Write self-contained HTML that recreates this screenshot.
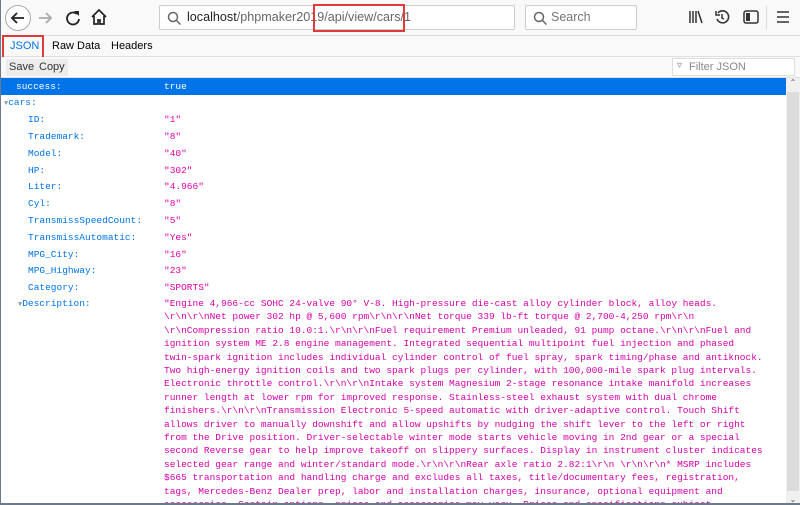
<!DOCTYPE html>
<html><head><style>
*{margin:0;padding:0;box-sizing:border-box}
html,body{width:800px;height:505px;overflow:hidden}
body{background:#fff;font-family:"Liberation Sans",sans-serif;position:relative}
.nav{position:absolute;left:0;top:0;width:800px;height:36px;background:#f9f9fa;border-bottom:1px solid #ddd}
.url{position:absolute;left:159px;top:5px;width:356px;height:25px;border:1px solid #ccc;background:#fff;border-radius:2px;font-size:12.6px;line-height:23px;padding-left:27px;color:#222}
.url span{color:#666}
.srch{position:absolute;left:525px;top:5px;width:112px;height:25px;border:1px solid #ccc;background:#fff;border-radius:2px;font-size:12.5px;line-height:23px;padding-left:25px;color:#777}
.red{position:absolute;border:2px solid #e03a3a}
.tabs{position:absolute;left:0;top:36px;width:800px;height:21px;background:#f9f9fa;border-bottom:1px solid #e0e0e0;font-size:11px}
.tabs div{position:absolute;top:4px}
.bar{position:absolute;left:0;top:57px;width:800px;height:21px;background:#f9f9fa;border-bottom:1px solid #e0e0e0;font-size:11px;color:#333}
.btn{position:absolute;top:2px;height:17px;background:#ececec;padding:2px 3px}
.filter{position:absolute;left:672px;top:1px;width:123px;height:18px;border:1px solid #ddd;background:#fff;color:#888;font-size:11px;padding:2px 0 0 16px}
.row{position:absolute;left:0;height:17px;width:786px;font-family:"Liberation Mono",monospace;font-size:9.5px;line-height:17px;white-space:pre}
.k{position:absolute;left:28px;color:#0074e8}
.v{position:absolute;left:164px;color:#dd00a9}
.sb{position:absolute;left:786px;top:78px;width:14px;height:427px;background:#f0f0f0}
.desc{position:absolute;left:164px;top:297px;width:620px;height:208px;overflow:hidden;font-family:"Liberation Mono",monospace;font-size:9.5px;line-height:13.4px;color:#d400a8;white-space:pre}
.tri{font-size:7px;color:#999}
</style></head><body>
<div class="nav">
<svg style="position:absolute;left:4px;top:4px" width="28" height="28"><circle cx="14" cy="14" r="12.5" fill="#fff" stroke="#aaa"/><path d="M20 14H8M13 9l-5 5 5 5" stroke="#222" stroke-width="1.8" fill="none"/></svg>
<svg style="position:absolute;left:36px;top:9px" width="18" height="18"><path d="M15 9H3M10 4l5 5-5 5" stroke="#aaa" stroke-width="1.8" fill="none"/></svg>
<svg style="position:absolute;left:64px;top:9px" width="18" height="18"><path d="M13 5A6 6 0 1 0 15 10" stroke="#222" stroke-width="1.8" fill="none"/><path d="M10 2h5v5z" fill="#222"/></svg>
<svg style="position:absolute;left:90px;top:8px" width="18" height="18"><path d="M2 9L9 2l7 7M4 8v8h4v-4h2v4h4V8" stroke="#222" stroke-width="1.7" fill="none"/></svg>
<div class="url"><svg style="position:absolute;left:7px;top:5px" width="14" height="14"><circle cx="6" cy="6" r="4.5" stroke="#666" stroke-width="1.5" fill="none"/><path d="M9.5 9.5l4 4" stroke="#666" stroke-width="1.5"/></svg>localhost<span>/phpmaker2019/api/view/cars/1</span></div>
<div class="srch"><svg style="position:absolute;left:7px;top:5px" width="14" height="14"><circle cx="6" cy="6" r="4.5" stroke="#666" stroke-width="1.5" fill="none"/><path d="M9.5 9.5l4 4" stroke="#666" stroke-width="1.5"/></svg>Search</div>
<svg style="position:absolute;left:688px;top:10px" width="16" height="14"><path d="M2 1v12M5 1v12M8 1v12M10 1l4 12" stroke="#333" stroke-width="1.5"/></svg>
<svg style="position:absolute;left:714px;top:9px" width="16" height="16"><path d="M4 4A6 6 0 1 1 3 10" stroke="#333" stroke-width="1.6" fill="none"/><path d="M2 2v4h4M8 5v4l2 1" stroke="#333" stroke-width="1.5" fill="none"/></svg>
<svg style="position:absolute;left:743px;top:10px" width="16" height="14"><rect x="1" y="1" width="14" height="12" rx="2" stroke="#333" stroke-width="1.5" fill="none"/><rect x="3" y="3" width="4" height="8" fill="#333"/></svg>
<div style="position:absolute;left:766px;top:6px;width:1px;height:24px;background:#ddd"></div>
<svg style="position:absolute;left:776px;top:11px" width="14" height="12"><path d="M1 1h12M1 6h12M1 11h12" stroke="#333" stroke-width="1.5"/></svg>
</div>
<div class="red" style="left:313px;top:4px;width:92px;height:28px"></div>
<div class="tabs"><div style="left:10px;color:#0074e8">JSON</div><div style="left:52px">Raw Data</div><div style="left:111px">Headers</div></div>
<div class="red" style="left:2px;top:35px;width:42px;height:25px"></div>
<div class="bar"><div class="btn" style="left:6px">Save</div><div class="btn" style="left:36px">Copy</div><div class="filter"><span style="position:absolute;left:4px;top:1px;font-size:10px">▿</span>Filter JSON</div></div>
<div class="row" style="top:78px;background:#0074e8"><span class="k" style="left:16px;color:#fff">success:</span><span class="v" style="color:#fff">true</span></div>
<div class="row" style="top:94px"><span class="k" style="left:4px"><span class="tri">▼</span>cars:</span></div>
<div class="row" style="top:111px"><span class="k">ID:</span><span class="v">"1"</span></div>
<div class="row" style="top:128px"><span class="k">Trademark:</span><span class="v">"8"</span></div>
<div class="row" style="top:145px"><span class="k">Model:</span><span class="v">"40"</span></div>
<div class="row" style="top:162px"><span class="k">HP:</span><span class="v">"302"</span></div>
<div class="row" style="top:178px"><span class="k">Liter:</span><span class="v">"4.966"</span></div>
<div class="row" style="top:195px"><span class="k">Cyl:</span><span class="v">"8"</span></div>
<div class="row" style="top:212px"><span class="k">TransmissSpeedCount:</span><span class="v">"5"</span></div>
<div class="row" style="top:229px"><span class="k">TransmissAutomatic:</span><span class="v">"Yes"</span></div>
<div class="row" style="top:246px"><span class="k">MPG_City:</span><span class="v">"16"</span></div>
<div class="row" style="top:262px"><span class="k">MPG_Highway:</span><span class="v">"23"</span></div>
<div class="row" style="top:279px"><span class="k">Category:</span><span class="v">"SPORTS"</span></div>
<div class="row" style="top:295px"><span class="k" style="left:18px"><span class="tri">▼</span>Description:</span></div>
<div class="desc">"Engine 4,966-cc SOHC 24-valve 90° V-8. High-pressure die-cast alloy cylinder block, alloy heads.
\r\n\r\nNet power 302 hp @ 5,600 rpm\r\n\r\nNet torque 339 lb-ft torque @ 2,700-4,250 rpm\r\n
\r\nCompression ratio 10.0:1.\r\n\r\nFuel requirement Premium unleaded, 91 pump octane.\r\n\r\nFuel and
ignition system ME 2.8 engine management. Integrated sequential multipoint fuel injection and phased
twin-spark ignition includes individual cylinder control of fuel spray, spark timing/phase and antiknock.
Two high-energy ignition coils and two spark plugs per cylinder, with 100,000-mile spark plug intervals.
Electronic throttle control.\r\n\r\nIntake system Magnesium 2-stage resonance intake manifold increases
runner length at lower rpm for improved response. Stainless-steel exhaust system with dual chrome
finishers.\r\n\r\nTransmission Electronic 5-speed automatic with driver-adaptive control. Touch Shift
allows driver to manually downshift and allow upshifts by nudging the shift lever to the left or right
from the Drive position. Driver-selectable winter mode starts vehicle moving in 2nd gear or a special
second Reverse gear to help improve takeoff on slippery surfaces. Display in instrument cluster indicates
selected gear range and winter/standard mode.\r\n\r\nRear axle ratio 2.82:1\r\n \r\n\r\n* MSRP includes
$665 transportation and handling charge and excludes all taxes, title/documentary fees, registration,
tags, Mercedes-Benz Dealer prep, labor and installation charges, insurance, optional equipment and
accessories. Certain options, prices and accessories may vary. Prices and specifications subject</div>
<div class="sb"><div style="position:absolute;left:1px;top:14px;width:12px;height:399px;background:#dcdcdc"></div><div style="position:absolute;top:0;width:14px;text-align:center;font-size:8px;color:#555">⌃</div><div style="position:absolute;bottom:1px;width:14px;text-align:center;font-size:8px;color:#555">⌄</div></div>
<div style="position:absolute;left:0;top:0;width:1px;height:505px;background:#6b7a8a"></div>
<div style="position:absolute;left:0;top:503px;width:800px;height:2px;background:#6b7a8a"></div>
</body></html>
